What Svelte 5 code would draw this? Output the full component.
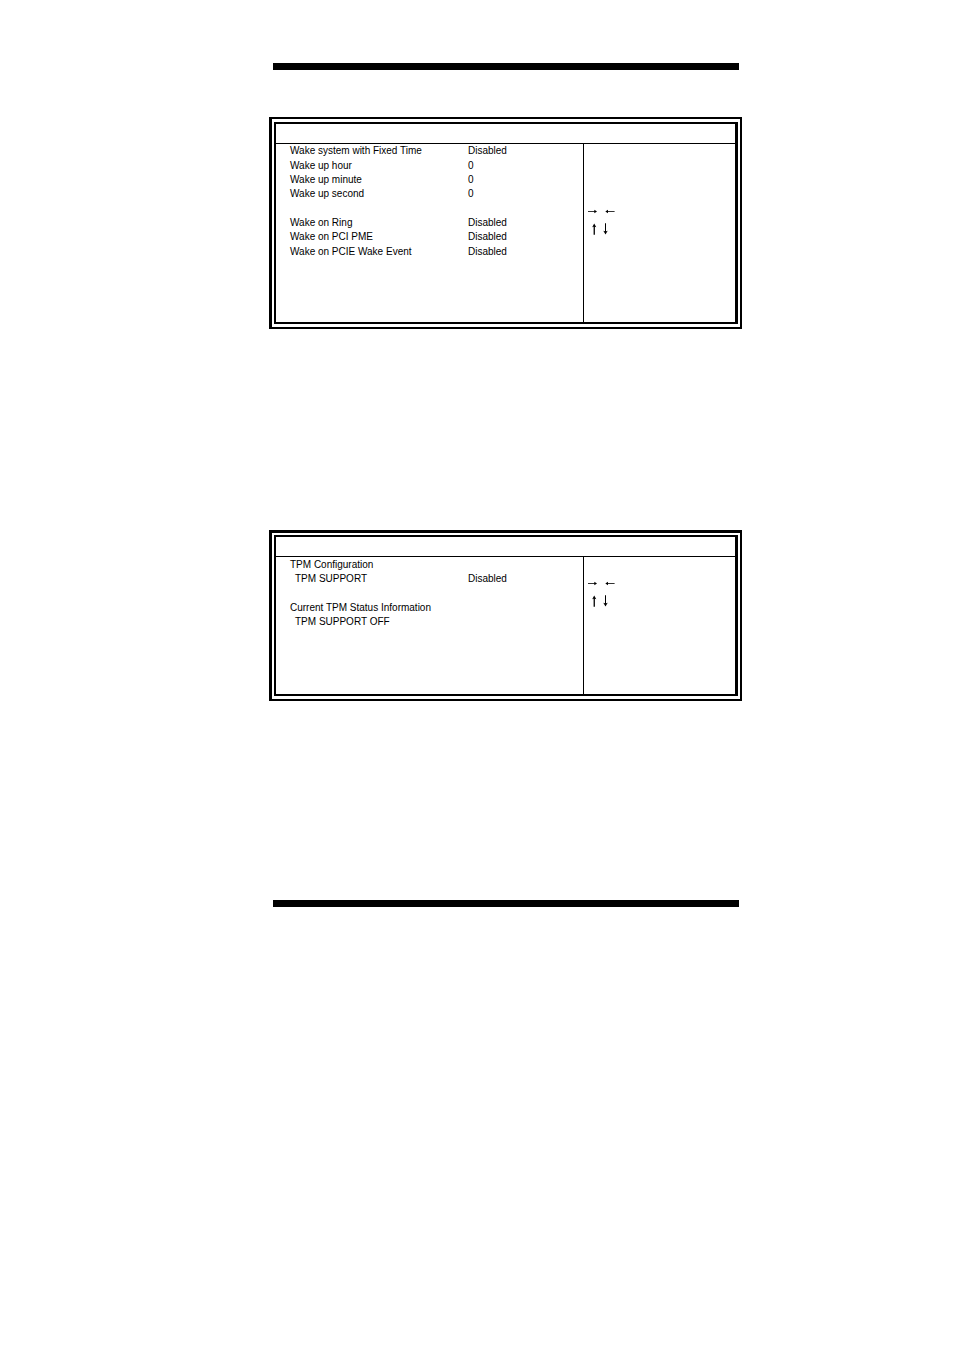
<script lang="ts">
  interface Row {
    label: string;
    value?: string;
    indent?: boolean;
  }

  interface Panel {
    name: string;
    rows: Row[];
  }

  const panels: Panel[] = [
    {
      name: "wake",
      rows: [
        { label: "Wake system with Fixed Time", value: "Disabled" },
        { label: "Wake up hour", value: "0" },
        { label: "Wake up minute", value: "0" },
        { label: "Wake up second", value: "0" },
        { label: "" },
        { label: "Wake on Ring", value: "Disabled" },
        { label: "Wake on PCI PME", value: "Disabled" },
        { label: "Wake on PCIE Wake Event", value: "Disabled" },
      ],
    },
    {
      name: "tpm",
      rows: [
        { label: "TPM Configuration" },
        { label: "TPM SUPPORT", value: "Disabled", indent: true },
        { label: "" },
        { label: "Current TPM Status Information" },
        { label: "TPM SUPPORT OFF", indent: true },
      ],
    },
  ];
</script>

<main class="page">
  <div class="bar"></div>

  {#each panels as panel (panel.name)}
    <section class="panel {panel.name}">
      <div class="frame">
        <div class="title"></div>
        <div class="body">
          <div class="settings">
            <table>
              <tbody>
                {#each panel.rows as row}
                  <tr>
                    <td class="label" class:indent={row.indent}>{row.label}</td>
                    <td>{row.value ?? ""}</td>
                  </tr>
                {/each}
              </tbody>
            </table>
          </div>

          <!-- navigation keys -->
          <div class="help">
            <div class="keys">
              <svg width="9" height="6" viewBox="0 0 9 6" role="img" aria-label="Right">
                <path d="M0 3.1h7v.8H0z" />
                <path d="M6.3 1.8L9 3.5L6.3 5.2z" />
              </svg>
              <svg width="10" height="6" viewBox="0 0 10 6" role="img" aria-label="Left">
                <path d="M2 3.1h7.6v.8H2z" />
                <path d="M3 1.8L.3 3.5L3 5.2z" />
              </svg>
            </div>
            <div class="keys vertical">
              <svg width="5" height="12" viewBox="0 0 5 12" role="img" aria-label="Up">
                <path d="M1.6 3h1.3v8.8H1.6z" />
                <path d="M2.2 .4L4.3 4.2L2.2 3.4L.2 4.2z" />
              </svg>
              <svg width="5" height="12" viewBox="0 0 5 12" role="img" aria-label="Down">
                <path d="M2 .3h1v9H2z" />
                <path d="M2.5 11.6L.3 7.8L2.5 8.6L4.7 7.8z" />
              </svg>
            </div>
          </div>
        </div>
      </div>
    </section>
  {/each}

  <div class="bar"></div>
</main>

<style>
  :global(body) {
    margin: 0;
    background: #fff;
  }

  .page {
    padding: 63px 212px 40px 269px;
    font-family: "Liberation Sans", Arial, sans-serif;
    font-size: 10px;
    line-height: 14px;
    color: #000;
  }

  .bar {
    height: 7px;
    margin: 0 3px 0 4px;
    background: #000;
  }

  .panel {
    border: solid #000;
    border-width: 2px 2px 2px 3px;
    padding: 3px 2px;
  }

  .wake {
    margin: 47px 0 201px;
  }

  .tpm {
    border-top-width: 3px;
    padding-top: 2px;
    margin-bottom: 199px;
  }

  .frame {
    border: solid #000;
    border-width: 2px 3px 2px 2px;
  }

  .title {
    height: 19px;
    border-bottom: 1px solid #000;
  }

  .body {
    display: flex;
  }

  .wake .body {
    min-height: 178px;
  }

  .tpm .body {
    min-height: 137px;
  }

  .settings {
    flex: 1;
    padding-left: 14px;
  }

  table {
    border-collapse: collapse;
  }

  .wake table {
    height: 115px;
  }

  .tpm table {
    height: 71px;
    margin-top: 1px;
  }

  td {
    padding: 0;
    height: 14px;
    white-space: nowrap;
  }

  .label {
    width: 178px;
  }

  .indent {
    padding-left: 5px;
    width: 173px;
  }

  .help {
    width: 147px;
    padding: 58px 0 0 4px;
    border-left: 1px solid #000;
  }

  .tpm .help {
    padding-top: 17px;
  }

  .keys {
    display: flex;
    align-items: center;
    gap: 8px;
    height: 18px;
  }

  .vertical {
    gap: 6px;
    padding-left: 4px;
  }
</style>
